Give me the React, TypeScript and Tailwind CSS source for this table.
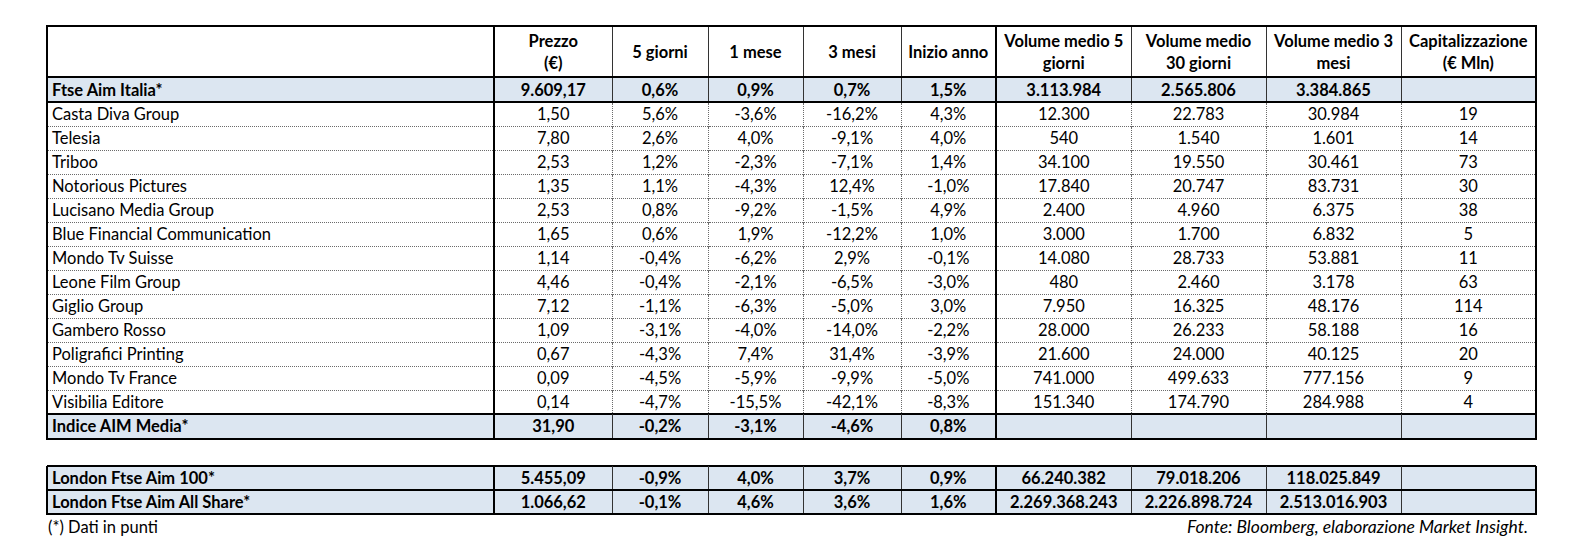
import React from "react";

type Row = { name: string; v: string[] };

const stocks: Row[] = [
  { name: "Casta Diva Group", v: ["1,50", "5,6%", "-3,6%", "-16,2%", "4,3%", "12.300", "22.783", "30.984", "19"] },
  { name: "Telesia", v: ["7,80", "2,6%", "4,0%", "-9,1%", "4,0%", "540", "1.540", "1.601", "14"] },
  { name: "Triboo", v: ["2,53", "1,2%", "-2,3%", "-7,1%", "1,4%", "34.100", "19.550", "30.461", "73"] },
  { name: "Notorious Pictures", v: ["1,35", "1,1%", "-4,3%", "12,4%", "-1,0%", "17.840", "20.747", "83.731", "30"] },
  { name: "Lucisano Media Group", v: ["2,53", "0,8%", "-9,2%", "-1,5%", "4,9%", "2.400", "4.960", "6.375", "38"] },
  { name: "Blue Financial Communication", v: ["1,65", "0,6%", "1,9%", "-12,2%", "1,0%", "3.000", "1.700", "6.832", "5"] },
  { name: "Mondo Tv Suisse", v: ["1,14", "-0,4%", "-6,2%", "2,9%", "-0,1%", "14.080", "28.733", "53.881", "11"] },
  { name: "Leone Film Group", v: ["4,46", "-0,4%", "-2,1%", "-6,5%", "-3,0%", "480", "2.460", "3.178", "63"] },
  { name: "Giglio Group", v: ["7,12", "-1,1%", "-6,3%", "-5,0%", "3,0%", "7.950", "16.325", "48.176", "114"] },
  { name: "Gambero Rosso", v: ["1,09", "-3,1%", "-4,0%", "-14,0%", "-2,2%", "28.000", "26.233", "58.188", "16"] },
  { name: "Poligrafici Printing", v: ["0,67", "-4,3%", "7,4%", "31,4%", "-3,9%", "21.600", "24.000", "40.125", "20"] },
  { name: "Mondo Tv France", v: ["0,09", "-4,5%", "-5,9%", "-9,9%", "-5,0%", "741.000", "499.633", "777.156", "9"] },
  { name: "Visibilia Editore", v: ["0,14", "-4,7%", "-15,5%", "-42,1%", "-8,3%", "151.340", "174.790", "284.988", "4"] },
];

const ftse: Row = { name: "Ftse Aim Italia*", v: ["9.609,17", "0,6%", "0,9%", "0,7%", "1,5%", "3.113.984", "2.565.806", "3.384.865", ""] };
const indice: Row = { name: "Indice AIM Media*", v: ["31,90", "-0,2%", "-3,1%", "-4,6%", "0,8%", "", "", "", ""] };
const london: Row[] = [
  { name: "London Ftse Aim 100*", v: ["5.455,09", "-0,9%", "4,0%", "3,7%", "0,9%", "66.240.382", "79.018.206", "118.025.849", ""] },
  { name: "London Ftse Aim All Share*", v: ["1.066,62", "-0,1%", "4,6%", "3,6%", "1,6%", "2.269.368.243", "2.226.898.724", "2.513.016.903", ""] },
];

const headers: React.ReactNode[] = [
  <>Prezzo<br />(€)</>,
  "5 giorni",
  "1 mese",
  "3 mesi",
  "Inizio anno",
  <>Volume medio 5<br />giorni</>,
  <>Volume medio<br />30 giorni</>,
  <>Volume medio 3<br />mesi</>,
  <>Capitalizzazione<br />(€ Mln)</>,
];

function Cols() {
  return (
    <colgroup>
      <col className="w-[447px]" />
      <col className="w-[118px]" />
      <col className="w-[96px]" />
      <col className="w-[95px]" />
      <col className="w-[98px]" />
      <col className="w-[95px]" />
      <col className="w-[135px]" />
      <col className="w-[135px]" />
      <col className="w-[135px]" />
      <col className="w-[135px]" />
    </colgroup>
  );
}

// vertical border after "Inizio anno" is heavy, like the one after the name column
function sideBorder(i: number, dotted: boolean) {
  if (i === 4) return "border-r-2 border-r-black border-solid";
  if (i === 8) return "border-r-2 border-r-black border-solid";
  return dotted ? "border-r border-r-[#6b6b6b] border-dotted" : "border-r border-r-[#333] border-solid";
}

function BlueRow({ row, h = "h-[24px]" }: { row: Row; h?: string }) {
  return (
    <tr className={`${h} border-b-2 border-b-black bg-[#dce6f1] font-bold`}>
      <td className="border-l-2 border-r-2 border-black pl-[4px] text-left">{row.name}</td>
      {row.v.map((x, i) => (
        <td key={i} className={`text-center ${sideBorder(i, false)}`}>
          {x}
        </td>
      ))}
    </tr>
  );
}

export default function App() {
  return (
    <div
      className="min-h-[539px] bg-white pl-[46px] pt-[25px] text-[16.5px] leading-[22px] text-black"
      style={{ fontFamily: "Lato, 'Open Sans', sans-serif" }}
    >
      <table className="table-fixed border-collapse">
        <Cols />
        <thead>
          <tr className="h-[51px] border-t-2 border-b-2 border-black font-bold">
            <th className="border-l-2 border-r-2 border-black" />
            {headers.map((h, i) => (
              <th key={i} className={`text-center align-middle font-bold ${sideBorder(i, false)}`}>
                {h}
              </th>
            ))}
          </tr>
        </thead>
        <tbody>
          <BlueRow row={ftse} h="h-[25px]" />
          {stocks.map((r, ri) => (
            <tr
              key={r.name}
              className={`h-[24px] ${ri < stocks.length - 1 ? "border-b border-dotted border-b-[#6b6b6b]" : ""}`}
            >
              <td className="border-l-2 border-r-2 border-solid border-black pl-[4px] text-left">{r.name}</td>
              {r.v.map((x, i) => (
                <td key={i} className={`text-center ${sideBorder(i, true)}`}>
                  {x}
                </td>
              ))}
            </tr>
          ))}
          <tr className="h-0 border-t-2 border-black" />
          <BlueRow row={indice} h="h-[25px]" />
        </tbody>
      </table>

      <table className="mt-[25px] table-fixed border-collapse">
        <Cols />
        <tbody>
          <tr className="h-0 border-t-2 border-black" />
          <BlueRow row={london[0]} />
          <BlueRow row={london[1]} />
        </tbody>
      </table>

      <div className="flex w-[1482px] items-baseline justify-between pl-[2px] pt-[1px] leading-[22px]">
        <span>(*) Dati in punti</span>
        <span className="text-[17.5px] italic">Fonte: Bloomberg, elaborazione Market Insight.</span>
      </div>
    </div>
  );
}
